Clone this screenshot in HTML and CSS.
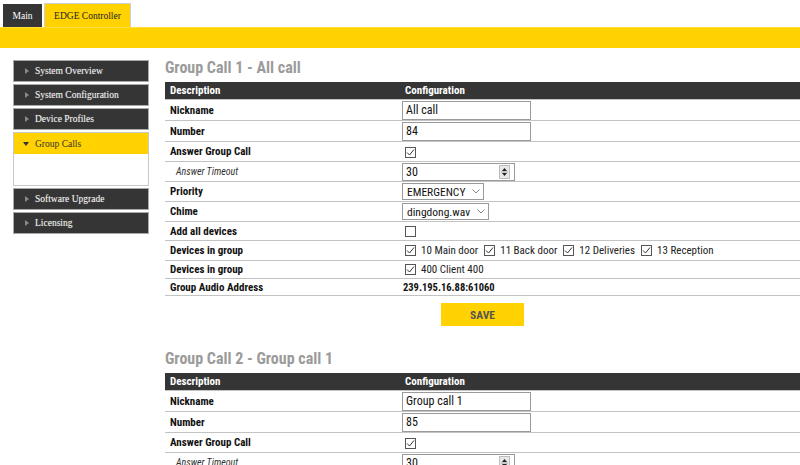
FILE: index.html
```html
<!DOCTYPE html>
<html>
<head>
<meta charset="utf-8">
<link rel="stylesheet" href="styles.css">
</head>
<body>
<div class="tabs">
  <div class="tab tab-main">Main</div>
  <div class="tab tab-edge">EDGE Controller</div>
</div>
<div class="bar"></div>
<div class="content">
  <nav class="sidebar">
    <div class="nav-item"><svg class="arr" width="4" height="6" viewBox="0 0 4 6"><polygon points="0,0 4,3 0,6"/></svg>System Overview</div>
    <div class="nav-item"><svg class="arr" width="4" height="6" viewBox="0 0 4 6"><polygon points="0,0 4,3 0,6"/></svg>System Configuration</div>
    <div class="nav-item"><svg class="arr" width="4" height="6" viewBox="0 0 4 6"><polygon points="0,0 4,3 0,6"/></svg>Device Profiles</div>
    <div class="nav-group">
      <div class="nav-group-head"><svg class="arr-down" width="6" height="4" viewBox="0 0 6 4"><polygon points="0,0 6,0 3,4"/></svg>Group Calls</div>
    </div>
    <div class="nav-item"><svg class="arr" width="4" height="6" viewBox="0 0 4 6"><polygon points="0,0 4,3 0,6"/></svg>Software Upgrade</div>
    <div class="nav-item"><svg class="arr" width="4" height="6" viewBox="0 0 4 6"><polygon points="0,0 4,3 0,6"/></svg>Licensing</div>
  </nav>
  <main class="main">
    <h2 class="title">Group Call 1 - All call</h2>
    <table class="cfg">
      <tr class="r-head"><th class="c-desc">Description</th><th>Configuration</th></tr>
      <tr class="r-inp"><td class="lbl">Nickname</td><td class="val"><span class="inp">All call</span></td></tr>
      <tr class="r-inp"><td class="lbl">Number</td><td class="val"><span class="inp">84</span></td></tr>
      <tr class="r-cb"><td class="lbl">Answer Group Call</td><td class="val"><span class="cb on"><svg width="9" height="9" viewBox="0 0 9 9"><polyline points="1,4.5 3.5,7 8,1.5"/></svg></span></td></tr>
      <tr class="r-cb"><td class="lbl sub">Answer Timeout</td><td class="val"><span class="inp num">30<span class="spin"><svg width="9" height="12" viewBox="0 0 9 12"><polygon points="2,5 4.5,2 7,5"/><line x1="1" y1="6" x2="8" y2="6"/><polygon points="2,7 4.5,10 7,7"/></svg></span></span></td></tr>
      <tr class="r-cb"><td class="lbl">Priority</td><td class="val"><span class="sel">EMERGENCY<svg class="chev" width="8" height="5" viewBox="0 0 8 5"><polyline points="0.5,0.5 4,4 7.5,0.5"/></svg></span></td></tr>
      <tr class="r-cb"><td class="lbl">Chime</td><td class="val"><span class="sel">dingdong.wav<svg class="chev" width="8" height="5" viewBox="0 0 8 5"><polyline points="0.5,0.5 4,4 7.5,0.5"/></svg></span></td></tr>
      <tr class="r-cb2"><td class="lbl">Add all devices</td><td class="val"><span class="cb"></span></td></tr>
      <tr class="r-cb"><td class="lbl">Devices in group</td><td class="val"><span class="devs">
        <span class="dev"><span class="cb on"><svg width="9" height="9" viewBox="0 0 9 9"><polyline points="1,4.5 3.5,7 8,1.5"/></svg></span>10 Main door</span>
        <span class="dev"><span class="cb on"><svg width="9" height="9" viewBox="0 0 9 9"><polyline points="1,4.5 3.5,7 8,1.5"/></svg></span>11 Back door</span>
        <span class="dev"><span class="cb on"><svg width="9" height="9" viewBox="0 0 9 9"><polyline points="1,4.5 3.5,7 8,1.5"/></svg></span>12 Deliveries</span>
        <span class="dev"><span class="cb on"><svg width="9" height="9" viewBox="0 0 9 9"><polyline points="1,4.5 3.5,7 8,1.5"/></svg></span>13 Reception</span>
      </span></td></tr>
      <tr class="r-cb3"><td class="lbl">Devices in group</td><td class="val"><span class="devs">
        <span class="dev"><span class="cb on"><svg width="9" height="9" viewBox="0 0 9 9"><polyline points="1,4.5 3.5,7 8,1.5"/></svg></span>400 Client 400</span>
      </span></td></tr>
      <tr class="r-txt"><td class="lbl">Group Audio Address</td><td class="val addr">239.195.16.88:61060</td></tr>
    </table>
    <div class="actions"><button class="save">SAVE</button></div>

    <h2 class="title">Group Call 2 - Group call 1</h2>
    <table class="cfg">
      <tr class="r-head"><th class="c-desc">Description</th><th>Configuration</th></tr>
      <tr class="r-inp"><td class="lbl">Nickname</td><td class="val"><span class="inp">Group call 1</span></td></tr>
      <tr class="r-inp"><td class="lbl">Number</td><td class="val"><span class="inp">85</span></td></tr>
      <tr class="r-cb"><td class="lbl">Answer Group Call</td><td class="val"><span class="cb on"><svg width="9" height="9" viewBox="0 0 9 9"><polyline points="1,4.5 3.5,7 8,1.5"/></svg></span></td></tr>
      <tr class="r-cb"><td class="lbl sub">Answer Timeout</td><td class="val"><span class="inp num">30<span class="spin"><svg width="9" height="12" viewBox="0 0 9 12"><polygon points="2,5 4.5,2 7,5"/><line x1="1" y1="6" x2="8" y2="6"/><polygon points="2,7 4.5,10 7,7"/></svg></span></span></td></tr>
    </table>
  </main>
</div>
</body>
</html>
```
FILE: styles.css
```css
html, body {
  margin: 0;
  padding: 0;
}
body {
  width: 800px;
  height: 465px;
  overflow: hidden;
  background: #fff;
  font-family: "Liberation Sans Narrow", "Roboto Condensed", Roboto, sans-serif;
  color: #111;
}

/* Tabs */
.tabs {
  display: flex;
  align-items: flex-end;
  height: 27px;
  padding-left: 3px;
  gap: 2px;
}
.tab {
  font-family: "Liberation Serif", serif;
  font-size: 9.5px;
  display: flex;
  align-items: center;
  justify-content: center;
  box-sizing: border-box;
}
.tab-main {
  width: 39px;
  height: 23px;
  background: #353535;
  color: #fff;
}
.tab-edge {
  width: 87px;
  height: 24px;
  background: #ffd200;
  color: #222;
  border: 1px solid #cfcfcf;
  border-bottom: 0;
}
.bar {
  height: 21px;
  background: #ffd200;
  box-sizing: border-box;
  border-top: 1px solid #ffdf3a;
}

/* Layout */
.content {
  display: flex;
  align-items: flex-start;
  padding: 10px 0 0 13px;
}

/* Sidebar */
.sidebar {
  width: 136px;
  flex: none;
  margin-top: 2px;
  display: flex;
  flex-direction: column;
  gap: 2px;
}
.nav-item {
  height: 22px;
  box-sizing: border-box;
  background: #353535;
  border: 1px solid #a9a9a9;
  color: #f2f2f2;
  display: flex;
  align-items: center;
  padding-left: 11px;
  font-family: "Liberation Serif", serif;
  font-size: 9.5px;
  text-shadow: 0 0 1px rgba(255,255,255,0.35);
}
.arr {
  fill: #8a8a8a;
  margin-right: 6px;
}
.nav-group {
  height: 54px;
  box-sizing: border-box;
  border: 1px solid #c9c9c9;
  background: #fff;
}
.nav-group-head {
  height: 21px;
  background: #ffd200;
  color: #333;
  display: flex;
  align-items: center;
  padding-left: 9px;
  font-family: "Liberation Serif", serif;
  font-size: 9.5px;
}
.arr-down {
  fill: #333;
  margin-right: 6px;
}

/* Main */
.main {
  flex: 1;
  margin-left: 16px;
}
.title {
  margin: 0 0 4px;
  font-size: 16px;
  line-height: 20px;
  font-weight: bold;
  color: #9b9b9b;
}
.cfg {
  width: 100%;
  border-collapse: collapse;
  font-size: 11.5px;
}
.cfg tr {
  border-bottom: 1px solid #c3c3c3;
}
.cfg th {
  background: #353535;
  color: #fff;
  text-align: left;
  font-size: 11px;
  font-weight: bold;
  padding: 0 5px;
  height: 17px;
}
.c-desc {
  width: 225px;
}
.cfg td {
  padding: 0;
}
.r-inp td { height: 20px; }
.r-cb td { height: 19px; }
.r-cb2 td { height: 18px; }
.r-cb3 td { height: 17px; }
.r-txt td { height: 16px; }
.lbl {
  padding-left: 5px !important;
  font-weight: bold;
  font-size: 11px;
  color: #111;
}
.lbl.sub {
  padding-left: 11px !important;
  font-weight: normal;
  font-style: italic;
  font-size: 10px;
  color: #333;
}
.val {
  padding-left: 2px !important;
}
.addr {
  padding-left: 3px !important;
  font-weight: bold;
  font-size: 10.5px;
}

/* Controls */
.inp {
  display: inline-flex;
  align-items: center;
  box-sizing: border-box;
  width: 129px;
  height: 19px;
  padding-left: 3px;
  border: 1px solid #9a9a9a;
  background: #fff;
  font-size: 12px;
  color: #111;
  vertical-align: middle;
}
.inp.num {
  width: 113px;
  height: 18px;
}
.spin {
  margin-left: auto;
  margin-right: 4px;
  width: 11px;
  height: 14px;
  box-sizing: border-box;
  border: 1px solid #bdbdbd;
  background: #e8e8e8;
  display: flex;
  align-items: center;
  justify-content: center;
}
.spin svg polygon { fill: #222; }
.spin svg line { stroke: #aaa; stroke-width: 1; }
.sel {
  display: inline-flex;
  align-items: center;
  box-sizing: border-box;
  height: 17px;
  padding: 0 3px 0 4px;
  border: 1px solid #9a9a9a;
  background: #fff;
  font-size: 11.5px;
  color: #111;
  vertical-align: middle;
}
.chev {
  margin-left: 7px;
  fill: none;
  stroke: #888;
  stroke-width: 1;
}
.cb {
  display: inline-flex;
  align-items: center;
  justify-content: center;
  width: 11px;
  height: 11px;
  box-sizing: border-box;
  border: 1px solid #555;
  background: #fff;
  margin-left: 3px;
  vertical-align: middle;
}
.cb svg polyline {
  fill: none;
  stroke: #333;
  stroke-width: 1;
}
.devs {
  display: inline-flex;
  align-items: center;
  gap: 6px;
  font-size: 11px;
  color: #222;
}
.dev {
  display: inline-flex;
  align-items: center;
  gap: 5px;
}
.dev:not(:first-child) .cb { margin-left: 0; }

.actions {
  display: flex;
  justify-content: center;
  padding: 7px 0 23px;
}
.save {
  width: 83px;
  height: 23px;
  border: 0;
  background: #ffd200;
  color: #555;
  font-family: inherit;
  font-weight: bold;
  font-size: 11.5px;
  padding: 0;
}
```
